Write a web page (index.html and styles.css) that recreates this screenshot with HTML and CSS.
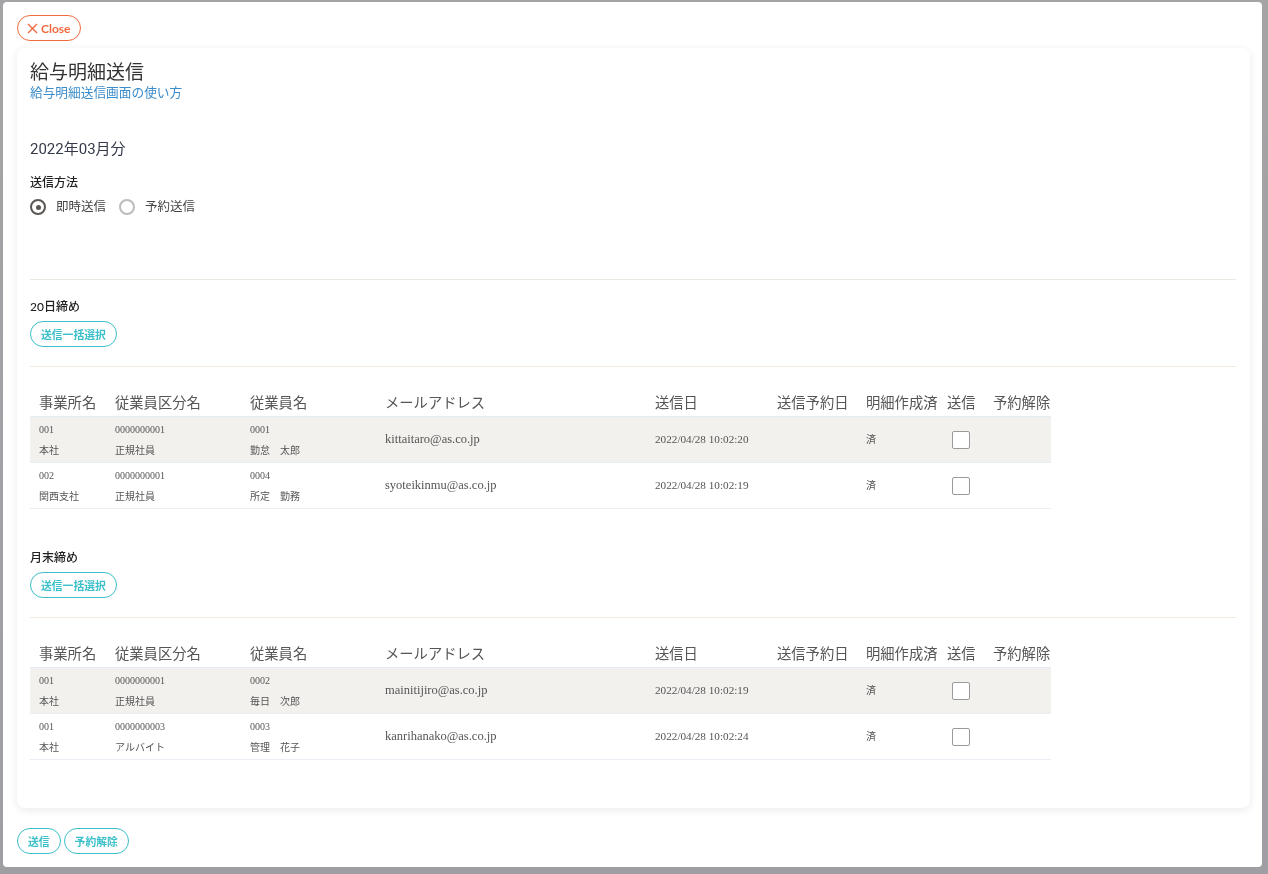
FILE: index.html
```html
<!DOCTYPE html>
<html lang="ja">
<head>
    <meta charset="UTF-8">
    <title>給与明細送信</title>
    <link rel="stylesheet" href="styles.css">
</head>
<body>

    <div class="backdrop"></div>

    <div class="modal">
        <button class="close-button">
            <svg width="11" height="11" viewBox="0 0 11 11"><path d="M1 1L10 10M10 1L1 10" stroke="#ef6a3e" stroke-width="1.4" fill="none"/></svg>
            Close
        </button>

        <div class="card">
            <div class="title">給与明細送信</div>
            <a href="#" class="help-link">給与明細送信画面の使い方</a>

            <div class="month">2022年03月分</div>

            <div class="label">送信方法</div>
            <div class="radios">
                <label class="radio"><span class="radio-mark checked"></span>即時送信</label>
                <label class="radio"><span class="radio-mark"></span>予約送信</label>
            </div>

            <hr class="divider">

            <div class="group">
                <div class="label">20日締め</div>
                <button class="pill-button">送信一括選択</button>
                <hr class="divider light">
                <table class="list">
                    <thead>
                        <tr>
                            <th class="c1">事業所名</th>
                            <th class="c2">従業員区分名</th>
                            <th class="c3">従業員名</th>
                            <th class="c4">メールアドレス</th>
                            <th class="c5">送信日</th>
                            <th class="c6">送信予約日</th>
                            <th class="c7">明細作成済</th>
                            <th class="c8">送信</th>
                            <th class="c9">予約解除</th>
                        </tr>
                    </thead>
                    <tbody>
                        <tr class="shaded">
                            <td><div>001</div><div>本社</div></td>
                            <td><div>0000000001</div><div>正規社員</div></td>
                            <td><div>0001</div><div>勤怠　太郎</div></td>
                            <td class="mail">kittaitaro@as.co.jp</td>
                            <td class="date">2022/04/28 10:02:20</td>
                            <td></td>
                            <td>済</td>
                            <td><span class="check"></span></td>
                            <td></td>
                        </tr>
                        <tr>
                            <td><div>002</div><div>関西支社</div></td>
                            <td><div>0000000001</div><div>正規社員</div></td>
                            <td><div>0004</div><div>所定　勤務</div></td>
                            <td class="mail">syoteikinmu@as.co.jp</td>
                            <td class="date">2022/04/28 10:02:19</td>
                            <td></td>
                            <td>済</td>
                            <td><span class="check"></span></td>
                            <td></td>
                        </tr>
                    </tbody>
                </table>
            </div>

            <div class="group">
                <div class="label">月末締め</div>
                <button class="pill-button">送信一括選択</button>
                <hr class="divider light">
                <table class="list">
                    <thead>
                        <tr>
                            <th class="c1">事業所名</th>
                            <th class="c2">従業員区分名</th>
                            <th class="c3">従業員名</th>
                            <th class="c4">メールアドレス</th>
                            <th class="c5">送信日</th>
                            <th class="c6">送信予約日</th>
                            <th class="c7">明細作成済</th>
                            <th class="c8">送信</th>
                            <th class="c9">予約解除</th>
                        </tr>
                    </thead>
                    <tbody>
                        <tr class="shaded">
                            <td><div>001</div><div>本社</div></td>
                            <td><div>0000000001</div><div>正規社員</div></td>
                            <td><div>0002</div><div>毎日　次郎</div></td>
                            <td class="mail">mainitijiro@as.co.jp</td>
                            <td class="date">2022/04/28 10:02:19</td>
                            <td></td>
                            <td>済</td>
                            <td><span class="check"></span></td>
                            <td></td>
                        </tr>
                        <tr>
                            <td><div>001</div><div>本社</div></td>
                            <td><div>0000000003</div><div>アルバイト</div></td>
                            <td><div>0003</div><div>管理　花子</div></td>
                            <td class="mail">kanrihanako@as.co.jp</td>
                            <td class="date">2022/04/28 10:02:24</td>
                            <td></td>
                            <td>済</td>
                            <td><span class="check"></span></td>
                            <td></td>
                        </tr>
                    </tbody>
                </table>
            </div>
        </div>

        <div class="footer">
            <button class="pill-button">送信</button>
            <button class="pill-button">予約解除</button>
        </div>
    </div>

</body>
</html>
```

FILE: styles.css
```css
body {
    margin: 0;
    padding: 0;
    font-family: Lato, "Noto Sans CJK JP", sans-serif;
    background-color: #a8a8ab;
    color: #333;
}

.backdrop {
    height: 874px;
    background: linear-gradient(#a4a4a7, #9f9fa3);
}

.modal {
    position: fixed;
    top: 2px;
    left: 3px;
    width: 1259px;
    height: 865px;
    box-sizing: border-box;
    padding: 13px 12px 14px 14px;
    background-color: #fff;
    border-radius: 4px;
    display: flex;
    flex-direction: column;
    overflow: hidden;
}

.modal > * {
    flex-shrink: 0;
}

.close-button {
    align-self: flex-start;
    display: flex;
    align-items: center;
    gap: 3px;
    height: 26px;
    padding: 0 9px 0 9px;
    background: #fff;
    border: 1px solid #ef6a3e;
    border-radius: 13px;
    color: #ef6a3e;
    font-family: Lato, sans-serif;
    font-size: 12px;
    font-weight: bold;
    cursor: pointer;
}

.card {
    margin-top: 7px;
    padding: 12px 14px 48px 13px;
    border-radius: 8px;
    background-color: #fff;
    box-shadow: 0 2px 8px rgba(0, 0, 0, 0.09);
}

.title {
    font-size: 19px;
    line-height: 24px;
    color: #333;
}

.help-link {
    display: block;
    font-size: 12.7px;
    line-height: 16px;
    color: #3a8bc9;
    text-decoration: none;
}

.month {
    margin-top: 38px;
    font-family: Roboto, "Noto Sans CJK JP", sans-serif;
    font-size: 15px;
    line-height: 22px;
    color: #343a4a;
}

.label {
    margin-top: 15px;
    font-size: 12px;
    line-height: 16px;
    font-weight: 500;
    color: #222;
}

.radios {
    display: flex;
    gap: 13px;
    margin-top: 8px;
}

.radio {
    display: flex;
    align-items: center;
    gap: 10px;
    font-size: 12.5px;
    line-height: 16px;
    color: #444;
}

.radio-mark {
    width: 12px;
    height: 12px;
    border: 2.5px solid #bcbcbc;
    border-radius: 50%;
    box-sizing: content-box;
    display: flex;
    align-items: center;
    justify-content: center;
}

.radio-mark.checked {
    border-color: #5b5753;
}

.radio-mark.checked::after {
    content: "";
    width: 5px;
    height: 5px;
    border-radius: 50%;
    background-color: #5b5753;
}

.divider {
    margin: 64px 0 0;
    border: none;
    border-top: 1px solid #ebe8e2;
}

.divider.light {
    margin: 19px 0 19px;
    border-top-color: #f1ebde;
}

.group {
    margin-top: 19px;
}

.group + .group {
    margin-top: 41px;
}

.group .label {
    margin-top: 0;
    margin-bottom: 6px;
    line-height: 16px;
}

.pill-button {
    height: 26px;
    padding: 0 10px;
    background: #fff;
    border: 1px solid #3bbfc9;
    border-radius: 13px;
    color: #3bbfc9;
    font-family: Lato, "Noto Sans CJK JP", sans-serif;
    font-size: 10.8px;
    font-weight: bold;
    cursor: pointer;
}

.list {
    width: 1021px;
    border-collapse: collapse;
    table-layout: fixed;
}

.list th {
    height: 30px;
    padding: 0 0 0 9px;
    text-align: left;
    font-size: 14.3px;
    font-weight: 400;
    color: #555;
    white-space: nowrap;
    border-bottom: 1px solid #e5ebf3;
}

.list .c1 { width: 67px; }
.list .c2 { width: 126px; }
.list .c3 { width: 126px; }
.list .c4 { width: 261px; }
.list .c5 { width: 113px; }
.list .c6 { width: 80px; }
.list .c7 { width: 72px; }
.list .c8 { width: 37px; }
.list .c9 { width: 58px; }

.list td {
    height: 45px;
    padding: 0 0 0 9px;
    font-family: "Liberation Serif", "Noto Sans CJK JP", serif;
    font-size: 10px;
    line-height: 21px;
    color: #555;
    border-bottom: 1px solid #e9eef5;
    white-space: nowrap;
}

.list td.mail {
    font-size: 12.5px;
}

.list td.date {
    font-size: 11.2px;
}

.list tr.shaded td {
    background-color: #f2f1ee;
}

.check {
    display: block;
    width: 16px;
    height: 16px;
    margin-left: 5px;
    border: 1px solid #9a9a9a;
    border-radius: 2px;
    background-color: #fff;
}

.footer {
    display: flex;
    gap: 3px;
    margin-top: 20px;
}
```
